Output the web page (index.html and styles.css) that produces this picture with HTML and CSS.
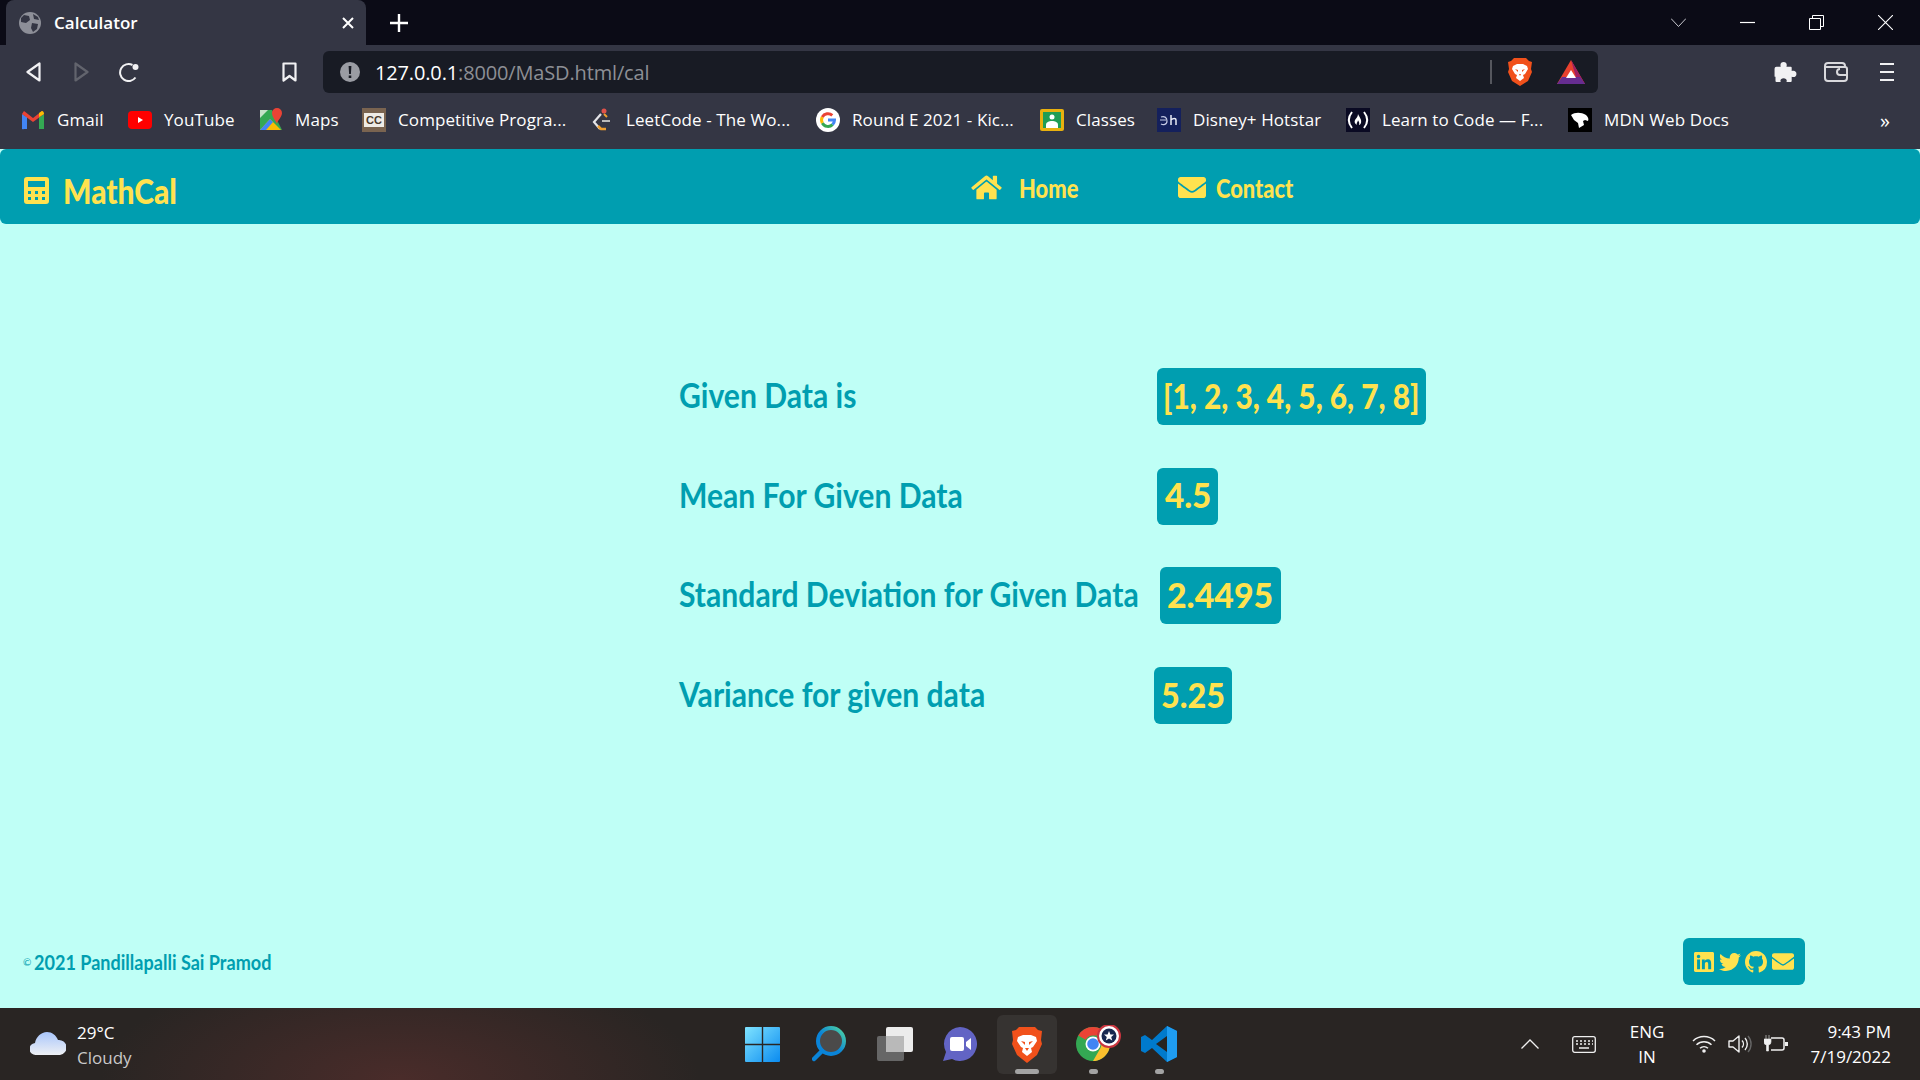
FILE: index.html
```html
<!DOCTYPE html>
<html>
    <head>
        <meta charset="utf-8">
        <title>Calculator</title>
        <link rel="stylesheet" href="styles.css">
    </head>
    <body>
        <div class="tabstrip">
            <div class="tab">
                <svg class="tab-globe" viewBox="0 0 22 22"><circle cx="11" cy="11" r="11" fill="#8d8f98"/><path d="M5 3l5 1 1 4-4 3-5-1 0-4zM13 11l6 1-1 5-4 3-2-4zM14 2l5 3 1 3-5-1z" fill="#343644"/></svg>
                <span class="tab-title">Calculator</span>
                <svg class="tab-close" viewBox="0 0 12 12"><path d="M1 1l10 10M11 1L1 11" stroke="#fff" stroke-width="2"/></svg>
            </div>
            <svg class="tab-new" viewBox="0 0 18 18"><path d="M9 0v18M0 9h18" stroke="#fff" stroke-width="2.4"/></svg>
            <div class="winctrls">
                <svg viewBox="0 0 15 15"><path d="M0 3.5l7.5 8 7.500-8" fill="none" stroke="#c9c9cf" stroke-width="1"/></svg>
                <svg viewBox="0 0 15 15"><path d="M0 7.500h15" stroke="#fff" stroke-width="1.200"/></svg>
                <svg viewBox="0 0 15 15"><path d="M.5 3.500h11v11H.5zM3.500 3.500V.5h11v11h-3" fill="none" stroke="#fff" stroke-width="1"/></svg>
                <svg viewBox="0 0 15 15"><path d="M0 0l15 15M15 0L0 15" stroke="#fff" stroke-width="1.100"/></svg>
            </div>
        </div>

        <div class="toolbar">
            <svg class="tool back" viewBox="0 0 15 20"><path d="M13.500 1.500v17L1.500 10z" fill="none" stroke="#f1f1f3" stroke-width="2.200" stroke-linejoin="round"/></svg>
            <svg class="tool forward" viewBox="0 0 15 20"><path d="M1.500 1.500v17l12-8.500z" fill="none" stroke="#62646d" stroke-width="2.200" stroke-linejoin="round"/></svg>
            <svg class="tool reload" viewBox="0 0 21 20"><path d="M16.500 15.500a8.500 8.500 0 1 1-3-12.500" fill="none" stroke="#f1f1f3" stroke-width="2"/><circle cx="16.500" cy="5" r="3" fill="#f1f1f3"/></svg>
            <svg class="tool bookmark" viewBox="0 0 15 20"><path d="M1.500 1.500h12v17l-6-4.500-6 4.500z" fill="none" stroke="#f1f1f3" stroke-width="2.200" stroke-linejoin="round"/></svg>
            <div class="address">
                <svg class="addr-info" viewBox="0 0 20 20"><circle cx="10" cy="10" r="10" fill="#9a9ca3"/><path d="M8.600 4h2.800l-.5 8H9.100zM8.700 13.500h2.600v2.600H8.700z" fill="#181b24"/></svg>
                <div class="addr-url"><span class="addr-host">127.0.0.1</span>:8000/MaSD.html/cal</div>
                <div class="addr-sep"></div>
                <svg class="addr-brave" viewBox="0 0 24 28"><path d="M6 0h12l3 3 3 1-1 7 1 3-4 9-8 5-8-5-4-9 1-3-1-7 3-1z" fill="#f1511b"/><path d="M5 8l4-2h6l4 2 1 3-3 5-2 1 1 3-4 3-4-3 1-3-2-1-3-5z" fill="#fff"/><path d="M7 11l3 1v2zM17 11l-3 1v2zM11 16h2l-1 2z" fill="#f1511b"/></svg>
                <svg class="addr-bat" viewBox="0 0 28 24"><path d="M14 0l14 24H0z" fill="#e8412e"/><path d="M14 0l14 24H21z" fill="#9e1f63"/><path d="M0 24l5-7h18l5 7z" fill="#662d91"/><path d="M14 10l5 8H9z" fill="#fff"/></svg>
            </div>
            <svg class="tool puzzle" viewBox="0 0 23 21"><path d="M2 5h4.500C5.500 2 7 0 9.500 0S13.500 2 12.500 5H17a1 1 0 0 1 1 1v3.500c3-1 5 .5 5 3s-2 4-5 3V20a1 1 0 0 1-1 1h-4.500c1-2.500-.5-4-3-4s-4 1.500-3 4H2a1 1 0 0 1-1-1v-4.500c-1 .2-1 0-1-1V7a2 2 0 0 1 2-2z" fill="#f1f1f3"/></svg>
            <svg class="tool wallet" viewBox="0 0 24 20"><path d="M21 5V4a3 3 0 0 0-3-3H4a3 3 0 0 0-3 3v12a3 3 0 0 0 3 3h16a3 3 0 0 0 3-3v-3" fill="none" stroke="#d9d9dd" stroke-width="2"/><path d="M1 5h20a2 2 0 0 1 2 2v6h-7a3 3 0 0 1 0-6" fill="none" stroke="#d9d9dd" stroke-width="2"/></svg>
            <svg class="tool menu" viewBox="0 0 14 19"><path d="M0 1.500h14M0 9.500h14M0 17.500h14" stroke="#f1f1f3" stroke-width="2.200"/></svg>
        </div>

        <div class="bookmarks">
            <div class="bm">
                <svg viewBox="0 0 24 24"><path d="M1 21V6l5 3v12H3a2 2 0 0 1-2 0z" fill="#4285f4"/><path d="M18 21V9l5-3v15z" fill="#34a853"/><path d="M1 6l11 8 11-8-2-3-9 7-9-7z" fill="#ea4335"/><path d="M18 9l5-3c0-2-1-3-2-3l-3 2z" fill="#fbbc04"/></svg>
                <span class="bm-gmail">Gmail</span>
            </div>
            <div class="bm">
                <svg viewBox="0 0 24 24"><rect y="3" width="24" height="18" rx="4" fill="#f00"/><path d="M10 9l5 3-5 3z" fill="#fff"/></svg>
                <span class="bm-youtube">YouTube</span>
            </div>
            <div class="bm">
                <svg viewBox="0 0 24 24"><path d="M1 2h12l10 20H1z" fill="#34a853"/><path d="M1 22l10-11 11 11z" fill="#fbbc04"/><path d="M1 22l10-11 3 3-7 8z" fill="#4285f4"/><path d="M1 2h8l-8 8z" fill="#c6e2c9"/><path d="M18 0a5 5 0 0 1 5 5c0 4-5 8-5 11-1-3-5-7-5-11a5 5 0 0 1 5-5z" fill="#ea4335"/></svg>
                <span class="bm-maps">Maps</span>
            </div>
            <div class="bm">
                <svg viewBox="0 0 24 24"><rect width="24" height="24" fill="#7a6450"/><rect x="2" y="5" width="20" height="14" fill="#efece6"/><text x="12" y="16" class="cc-text">CC</text></svg>
                <span class="bm-cp">Competitive Progra...</span>
            </div>
            <div class="bm">
                <svg viewBox="0 0 24 24"><circle cx="14" cy="3" r="2.500" fill="#e0524a"/><path d="M11 6l-7 8 6 7" fill="none" stroke="#e4e4e8" stroke-width="2.200"/><path d="M8 18l3 3h5" fill="none" stroke="#f0a030" stroke-width="2.500"/><path d="M12 13h8" stroke="#bbb" stroke-width="2"/><path d="M14 6l3 3" stroke="#f0a030" stroke-width="2"/></svg>
                <span class="bm-leet">LeetCode - The Wo...</span>
            </div>
            <div class="bm">
                <svg viewBox="0 0 24 24"><circle cx="12" cy="12" r="12" fill="#fff"/><path d="M12 12h6.500a6.500 6.500 0 0 1-2 4.700" fill="none" stroke="#4285f4" stroke-width="3"/><path d="M16.500 16.700A6.500 6.500 0 0 1 6.300 15" fill="none" stroke="#34a853" stroke-width="3"/><path d="M6.300 15a6.500 6.500 0 0 1 0-6" fill="none" stroke="#fbbc04" stroke-width="3"/><path d="M6.300 9a6.500 6.500 0 0 1 10-1.700" fill="none" stroke="#ea4335" stroke-width="3"/></svg>
                <span class="bm-google">Round E 2021 - Kic...</span>
            </div>
            <div class="bm">
                <svg viewBox="0 0 24 24"><rect y="1" width="24" height="22" rx="2" fill="#e8b10f"/><rect x="3" y="4" width="18" height="16" fill="#1f9d55"/><circle cx="12" cy="9" r="2.500" fill="#fff"/><path d="M6 17c0-3 3-4 6-4s6 1 6 4v3H6z" fill="#fff"/></svg>
                <span class="bm-classes">Classes</span>
            </div>
            <div class="bm">
                <svg viewBox="0 0 24 24"><rect width="24" height="24" fill="#14205c"/><path d="M4 9c3-1 6 0 6 4s-4 4-6 3M3 12h6" fill="none" stroke="#c6cbe6" stroke-width="1.200"/><path d="M14 7v10M14 12c2-2 5-2 5 0v5" fill="none" stroke="#e8eaf6" stroke-width="1.500"/></svg>
                <span class="bm-disney">Disney+ Hotstar</span>
            </div>
            <div class="bm">
                <svg viewBox="0 0 24 24"><rect width="24" height="24" fill="#0a0a23"/><path d="M6 4C2 9 2 15 6 20M18 4c4 5 4 11 0 16" fill="none" stroke="#fff" stroke-width="2"/><path d="M12 6c1 3 4 5 3 9-1 2-2 2-2 2 1-3-1-4-1-5 0 2-2 3-1 5-2-1-3-3-2-5 1-2 3-3 3-6z" fill="#fff"/></svg>
                <span class="bm-fcc">Learn to Code — F...</span>
            </div>
            <div class="bm">
                <svg viewBox="0 0 24 24"><rect width="24" height="24" fill="#000"/><path d="M3 7c4-3 10-3 15 0 2 2 3 4 2 6l-3-1-2 1 1 4-5 3-1-5-4-3z" fill="#fff"/></svg>
                <span class="bm-mdn">MDN Web Docs</span>
            </div>
            <span class="bm-more">»</span>
        </div>

        <div class="navbar">
            <div class="brand">
                <svg class="brand-icon" viewBox="0 0 25 27"><path fill-rule="evenodd" d="M3 0h19a3 3 0 0 1 3 3v21a3 3 0 0 1-3 3H3a3 3 0 0 1-3-3V3a3 3 0 0 1 3-3zM4 4v6h17V4zM4 14v3h3v-3zM11 14v3h3v-3zM18 14v3h3v-3zM4 20v3h3v-3zM11 20v3h3v-3zM18 20v3h3v-3z" fill="#ffe24f"/></svg>
                <span class="brand-name"><span class="squeeze">MathCal</span></span>
            </div>
            <a class="navlink nav-home">
                <svg class="home-icon" viewBox="0 0 576 512"><path d="M280.37 148.26L96 300.11V464a16 16 0 0 0 16 16l112.06-.29a16 16 0 0 0 15.92-16V368a16 16 0 0 1 16-16h64a16 16 0 0 1 16 16v95.64a16 16 0 0 0 16 16.05L464 480a16 16 0 0 0 16-16V300L295.67 148.26a12.19 12.19 0 0 0-15.3 0zM571.6 251.47L488 182.56V44.05a12 12 0 0 0-12-12h-56a12 12 0 0 0-12 12v72.61L318.47 43a48 48 0 0 0-61 0L4.34 251.47a12 12 0 0 0-1.6 16.9l25.5 31A12 12 0 0 0 45.15 301l235.22-193.74a12.19 12.19 0 0 1 15.3 0L530.9 301a12 12 0 0 0 16.9-1.6l25.5-31a12 12 0 0 0-1.7-16.93z" fill="#ffe24f"/></svg>
                <span class="nav-text nav-text-home"><span class="squeeze">Home</span></span>
            </a>
            <a class="navlink nav-contact">
                <svg class="mail-icon" viewBox="0 0 512 384"><path d="M502.3 126.800c3.900-3.100 9.700-.2 9.700 4.700V336c0 26.500-21.500 48-48 48H48c-26.500 0-48-21.500-48-48V131.600c0-5 5.700-7.800 9.700-4.700 22.400 17.400 52.100 39.500 154.100 113.600 21.100 15.400 56.700 47.800 92.200 47.600 35.700.3 72-32.800 92.300-47.600 102-74.100 131.600-96.300 154-113.700zM256 256c23.200.4 56.600-29.200 73.400-41.400 132.700-96.300 142.800-104.700 173.400-128.700 5.800-4.500 9.200-11.500 9.200-18.900V48c0-26.500-21.500-48-48-48H48C21.500 0 0 21.500 0 48v19c0 7.400 3.400 14.300 9.200 18.900 30.600 23.900 40.700 32.400 173.400 128.700 16.800 12.200 50.200 41.800 73.400 41.400z" fill="#ffe24f"/></svg>
                <span class="nav-text"><span class="squeeze">Contact</span></span>
            </a>
        </div>

        <div class="main">
            <div class="row">
                <div class="label"><span class="squeeze">Given Data is</span></div>
                <div class="value value-list"><span class="squeeze">[1, 2, 3, 4, 5, 6, 7, 8]</span></div>
            </div>
            <div class="row">
                <div class="label"><span class="squeeze">Mean For Given Data</span></div>
                <div class="value value-mean"><span class="squeeze">4.5</span></div>
            </div>
            <div class="row">
                <div class="label"><span class="squeeze">Standard Deviation for Given Data</span></div>
                <div class="value value-sd"><span class="squeeze">2.4495</span></div>
            </div>
            <div class="row">
                <div class="label"><span class="squeeze">Variance for given data</span></div>
                <div class="value value-var"><span class="squeeze">5.25</span></div>
            </div>
        </div>

        <div class="footer">
            <div class="copy"><span class="copy-mark">©</span><span class="squeeze">2021 Pandillapalli Sai Pramod</span></div>
            <div class="social">
                <svg class="soc-in" viewBox="0 32 448 448"><path d="M416 32H31.900C14.300 32 0 46.500 0 64.300v383.400C0 465.500 14.300 480 31.900 480H416c17.600 0 32-14.500 32-32.300V64.300c0-17.800-14.400-32.300-32-32.300zM135.400 416H69V202.200h66.500V416zm-33.200-243c-21.300 0-38.500-17.300-38.500-38.500S80.900 96 102.200 96c21.200 0 38.500 17.300 38.500 38.500 0 21.300-17.200 38.500-38.500 38.500zm282.100 243h-66.400V312c0-24.800-.5-56.700-34.500-56.700-34.600 0-39.900 27-39.900 54.900V416h-66.400V202.200h63.700v29.200h.9c8.900-16.800 30.600-34.500 62.900-34.500 67.200 0 79.700 44.300 79.700 101.900V416z" fill="#ffe24f"/></svg>
                <svg class="soc-tw" viewBox="0 48 512 416"><path d="M459.370 151.716c.325 4.548.325 9.097.325 13.645 0 138.720-105.583 298.558-298.558 298.558-59.452 0-114.680-17.219-161.137-47.106 8.447.974 16.568 1.299 25.340 1.299 49.055 0 94.213-16.568 130.274-44.832-46.132-.975-84.792-31.188-98.112-72.772 6.498.974 12.995 1.624 19.818 1.624 9.421 0 18.843-1.300 27.614-3.573-48.081-9.747-84.143-51.980-84.143-102.985v-1.299c13.969 7.797 30.214 12.670 47.431 13.319-28.264-18.843-46.781-51.005-46.781-87.391 0-19.492 5.197-37.360 14.294-52.954 51.655 63.675 129.300 105.258 216.365 109.807-1.624-7.797-2.599-15.918-2.599-24.040 0-57.828 46.782-104.934 104.934-104.934 30.213 0 57.502 12.670 76.670 33.137 23.715-4.548 46.456-13.320 66.599-25.340-7.798 24.366-24.366 44.833-46.132 57.827 21.117-2.273 41.584-8.122 60.426-16.243-14.292 20.791-32.161 39.308-52.628 54.253z" fill="#ffe24f"/></svg>
                <svg class="soc-gh" viewBox="0 0 16 16"><path d="M8 0C3.580 0 0 3.580 0 8c0 3.540 2.290 6.530 5.470 7.590.4.070.55-.17.55-.38 0-.19-.01-.82-.01-1.490-2.010.37-2.530-.49-2.690-.94-.09-.23-.48-.94-.82-1.130-.28-.15-.68-.52-.01-.53.63-.01 1.080.58 1.230.82.72 1.210 1.870.87 2.330.66.070-.52.28-.87.51-1.070-1.780-.2-3.640-.89-3.640-3.950 0-.87.31-1.590.82-2.150-.08-.2-.36-1.020.08-2.120 0 0 .67-.21 2.200.82.64-.18 1.320-.27 2-.27.68 0 1.360.09 2 .27 1.530-1.040 2.200-.82 2.200-.82.44 1.100.16 1.920.08 2.120.51.56.82 1.270.82 2.150 0 3.070-1.870 3.750-3.650 3.950.29.25.54.73.54 1.480 0 1.070-.01 1.930-.01 2.200 0 .21.15.46.55.38A8.013 8.013 0 0 0 16 8c0-4.420-3.580-8-8-8z" fill="#ffe24f"/></svg>
                <svg class="soc-mail" viewBox="0 0 512 384"><path d="M502.300 126.800c3.900-3.100 9.700-.2 9.700 4.700V336c0 26.500-21.500 48-48 48H48c-26.500 0-48-21.500-48-48V131.600c0-5 5.700-7.800 9.700-4.700 22.400 17.400 52.100 39.500 154.100 113.600 21.100 15.400 56.700 47.800 92.200 47.600 35.700.3 72-32.800 92.300-47.600 102-74.100 131.600-96.300 154-113.700zM256 256c23.200.4 56.600-29.200 73.400-41.400 132.700-96.300 142.800-104.700 173.400-128.700 5.800-4.500 9.200-11.500 9.200-18.900V48c0-26.500-21.500-48-48-48H48C21.500 0 0 21.500 0 48v19c0 7.400 3.400 14.300 9.200 18.900 30.600 23.900 40.700 32.400 173.400 128.700 16.800 12.200 50.200 41.800 73.400 41.400z" fill="#ffe24f"/></svg>
            </div>
        </div>

        <div class="taskbar">
            <div class="weather">
                <svg class="weather-icon" viewBox="0 0 36 24"><defs><linearGradient id="cloud" x1="0" y1="0" x2="0" y2="1"><stop offset="0" stop-color="#a9c6fb"/><stop offset="1" stop-color="#eef0f4"/></linearGradient></defs><path d="M6 23a6 6 0 0 1-1-12c1-6 6-11 12-11 5 0 9 3 11 8a7.500 7.500 0 0 1 2 15z" fill="url(#cloud)"/></svg>
                <div class="weather-text">
                    <div class="weather-temp">29°C</div>
                    <div class="weather-desc">Cloudy</div>
                </div>
            </div>
            <div class="apps">
                <svg class="app app-start" viewBox="0 0 35 35"><defs><linearGradient id="win" x1="0" y1="0" x2="1" y2="1"><stop offset="0" stop-color="#7fe3ff"/><stop offset="1" stop-color="#0a8bf0"/></linearGradient></defs><path d="M1 0h15.800v16.800H0V1a1 1 0 0 1 1-1zM18.200 0H34a1 1 0 0 1 1 1v15.800H18.200zM0 18.200h16.800V35H1a1 1 0 0 1-1-1zM18.200 18.200H35V34a1 1 0 0 1-1 1H18.200z" fill="url(#win)"/></svg>
                <svg class="app app-search" viewBox="0 0 34 36"><defs><linearGradient id="ring" x1="0" y1="1" x2="1" y2="0"><stop offset=".45" stop-color="#0a84d8"/><stop offset="1" stop-color="#4fd6a0"/></linearGradient></defs><circle cx="19" cy="15" r="13" fill="#4b4a4a" stroke="url(#ring)" stroke-width="4"/><path d="M10 25l-8 8" stroke="#0a84d8" stroke-width="4.500" stroke-linecap="round"/></svg>
                <svg class="app app-view" viewBox="0 0 36 34"><rect y="9" width="27" height="25" rx="2" fill="#666"/><rect x="9" width="27" height="25" rx="2" fill="#ececec"/><rect x="9" y="9" width="18" height="16" fill="#b9b9b9"/></svg>
                <svg class="app app-chat" viewBox="0 0 34 34"><path d="M17 0a17 17 0 1 1-8 32l-9 2 3-9A17 17 0 0 1 17 0z" fill="#6264c4"/><rect x="7" y="10" width="14" height="14" rx="2" fill="#fff"/><path d="M23 15l5-4v12l-5-4z" fill="#fff"/></svg>
                <div class="app-active">
                    <svg class="app-brave" viewBox="0 0 30 36"><path d="M7 0h16l3 3 4 1-1 9 1 4-5 11-10 8-10-8-5-11 1-4-1-9 4-1z" fill="#f1511b"/><path d="M6 10l5-2h8l5 2 1 4-4 6-2 1 1 4-5 4-5-4 1-4-2-1-4-6z" fill="#fff"/><path d="M9 14l4 1v3zM21 14l-4 1v3zM13 21h4l-2 3z" fill="#f1511b"/></svg>
                    <div class="pill pill-wide"></div>
                </div>
                <div class="app-chrome">
                    <svg class="chrome-logo" viewBox="0 0 46 36"><circle cx="17" cy="19" r="17" fill="#34a853"/><path d="M17 2a17 17 0 0 1 14.700 8.500H17A8.500 8.500 0 0 0 9.600 14.800L2.300 10.500A17 17 0 0 1 17 2z" fill="#ea4335"/><path d="M31.700 10.500A17 17 0 0 1 17 36l7.400-12.800A8.500 8.500 0 0 0 25.500 19z" fill="#fbc02d"/><circle cx="17" cy="19" r="7.500" fill="#fff"/><circle cx="17" cy="19" r="5.800" fill="#4285f4"/><circle cx="33" cy="11" r="11" fill="#fff"/><circle cx="33" cy="11" r="11" fill="none" stroke="#c8353f" stroke-width="2"/><circle cx="33" cy="11" r="7.500" fill="#17284f"/><path d="M33 6l1.400 3.400 3.600.2-2.800 2.300 1 3.600-3.200-2-3.200 2 1-3.600L28 9.600l3.600-.2z" fill="#fff"/></svg>
                    <div class="pill"></div>
                </div>
                <div class="app-vscode">
                    <svg class="vscode-logo" viewBox="0 0 36 36"><path d="M26 0l10 5v26l-10 5-15-14-7 5-4-2v-14l4-2 7 5z" fill="#007acc"/><path d="M26 0l10 5v26l-10 5z" fill="#1f9cf0"/><path d="M26 10L15 18l11 8z" fill="#262321"/></svg>
                    <div class="pill"></div>
                </div>
            </div>
            <div class="tray">
                <svg class="tray-chevron" viewBox="0 0 18 10"><path d="M.5 9.500L9 1l8.500 8.500" fill="none" stroke="#f0f0f0" stroke-width="1.300"/></svg>
                <svg class="tray-keyboard" viewBox="0 0 24 17"><rect x=".7" y=".7" width="22.600" height="15.600" rx="2" fill="none" stroke="#f0f0f0" stroke-width="1.300"/><path d="M4 5h2M8 5h2M12 5h2M16 5h2M20 5h1M4 8h2M8 8h2M12 8h2M16 8h2M20 8h1M7 12h10" stroke="#f0f0f0" stroke-width="1.300"/></svg>
                <div class="tray-lang">ENG<br>IN</div>
                <svg class="tray-wifi" viewBox="0 0 24 18"><path d="M1 6a16 16 0 0 1 22 0M4.500 9.800a11 11 0 0 1 15 0M8 13.200a6 6 0 0 1 8 0" fill="none" stroke="#f0f0f0" stroke-width="1.500"/><circle cx="12" cy="16" r="1.800" fill="#f0f0f0"/></svg>
                <svg class="tray-vol" viewBox="0 0 24 18"><path d="M1 6h4l6-5v16l-6-5H1z" fill="none" stroke="#f0f0f0" stroke-width="1.400" stroke-linejoin="round"/><path d="M14 5.500a5 5 0 0 1 0 7M17 3a9 9 0 0 1 0 12" fill="none" stroke="#f0f0f0" stroke-width="1.400"/><path d="M20 1a12 12 0 0 1 0 16" fill="none" stroke="#666" stroke-width="1.400"/></svg>
                <svg class="tray-batt" viewBox="0 0 24 18"><path d="M7 3h11a2 2 0 0 1 2 2v8a2 2 0 0 1-2 2H7" fill="none" stroke="#f0f0f0" stroke-width="1.500"/><path d="M21 7h3v4h-3z" fill="#f0f0f0"/><path d="M2 0v4M5 0v4M0 4h7v3a3 3 0 0 1-2.500 3v6h-2v-6A3 3 0 0 1 0 7z" fill="#f0f0f0" stroke="#f0f0f0" stroke-width=".6"/></svg>
                <div class="tray-clock">9:43 PM<br>7/19/2022</div>
            </div>
        </div>
    </body>
</html>
```

FILE: styles.css
```css
html, body {
    margin: 0;
    height: 100%;
}
body {
    width: 1920px;
    height: 1080px;
    overflow: hidden;
    display: flex;
    flex-direction: column;
    background-color: #bffff6;
    font-family: "Open Sans", "Noto Sans", sans-serif;
}
svg {
    display: block;
    flex: none;
}

/* no condensed face is installed, so the site's narrow font is squeezed */
.squeeze {
    display: inline-block;
    white-space: nowrap;
    transform: scaleX(.86);
    transform-origin: left center;
}

/* browser tabs */
.tabstrip {
    height: 45px;
    flex: none;
    display: flex;
    align-items: center;
    padding-left: 6px;
    background-color: #0b0b16;
}
.tab {
    width: 360px;
    height: 45px;
    box-sizing: border-box;
    padding: 0 12px 0 13px;
    display: flex;
    align-items: center;
    background-color: #343644;
    border-radius: 8px 8px 0 0;
}
.tab-globe {
    width: 22px;
    height: 22px;
}
.tab-title {
    margin-left: 13px;
    font-size: 17px;
    font-weight: 600;
    color: #fff;
}
.tab-close {
    width: 12px;
    height: 12px;
    margin-left: auto;
}
.tab-new {
    width: 18px;
    height: 18px;
    margin-left: 24px;
}
.winctrls {
    margin-left: auto;
    padding-right: 27px;
    display: flex;
    gap: 54px;
}
.winctrls svg {
    width: 15px;
    height: 15px;
    margin-top: -1px;
}

/* address bar */
.toolbar {
    height: 42px;
    flex: none;
    padding-top: 6px;
    display: flex;
    align-items: center;
    background-color: #343644;
}
.tool {
    height: 20px;
}
.back { width: 15px; margin-left: 26px; }
.forward { width: 15px; margin-left: 33px; }
.reload { width: 21px; margin-left: 30px; }
.bookmark { width: 15px; margin-left: 142px; }
.address {
    width: 1275px;
    height: 42px;
    margin-left: 26px;
    display: flex;
    align-items: center;
    background-color: #181b24;
    border-radius: 6px;
}
.addr-info {
    width: 20px;
    height: 20px;
    margin-left: 17px;
}
.addr-url {
    width: 1115px;
    margin-left: 15px;
    font-size: 20px;
    letter-spacing: -0.15px;
    color: #8d8f95;
}
.addr-host {
    color: #fff;
}
.addr-sep {
    width: 2px;
    height: 24px;
    background-color: #55575e;
}
.addr-brave {
    width: 24px;
    height: 28px;
    margin-left: 16px;
}
.addr-bat {
    width: 28px;
    height: 24px;
    margin-left: 25px;
}
.puzzle { width: 23px; margin-left: 176px; }
.wallet { width: 24px; margin-left: 27px; }
.menu { width: 14px; margin-left: 32px; }

/* bookmarks */
.bookmarks {
    height: 54px;
    flex: none;
    padding: 0 30px 2px 21px;
    display: flex;
    align-items: center;
    gap: 26px;
    background-color: #343644;
    font-size: 17px;
    letter-spacing: .1px;
    color: #fff;
}
.bm {
    display: flex;
    align-items: center;
    gap: 12px;
    white-space: nowrap;
}
.bm span {
    margin-top: -2px;
}
.bm svg {
    width: 24px;
    height: 24px;
}
.cc-text {
    font-family: "Liberation Sans", sans-serif;
    font-size: 11px;
    font-weight: bold;
    text-anchor: middle;
    fill: #4a3a2c;
}
.bm-gmail { width: 45px; }
.bm-youtube { width: 69px; }
.bm-maps { width: 41px; }
.bm-cp { width: 166px; }
.bm-leet { width: 164px; }
.bm-google { width: 162px; }
.bm-classes { width: 55px; }
.bm-disney { width: 127px; }
.bm-fcc { width: 160px; }
.bm-mdn { width: 127px; }
.bm-more {
    margin-left: auto;
    font-size: 20px;
}

/* site nav */
.navbar {
    height: 75px;
    flex: none;
    padding-left: 24px;
    display: flex;
    align-items: center;
    background-color: #009eb0;
    border-radius: 6px;
    font-family: Lato, "Liberation Sans", sans-serif;
    font-weight: 900;
    color: #ffe24f;
}
.brand {
    width: 947px;
    padding-top: 7px;
    display: flex;
    align-items: center;
    gap: 14px;
    flex: none;
}
.brand-icon {
    width: 25px;
    height: 27px;
}
.brand-name {
    width: 111px;
    font-size: 35px;
}
.brand-name .squeeze {
    transform: scaleX(.856);
}
.navlink {
    display: flex;
    align-items: center;
    font-size: 27px;
    padding-top: 1px;
}
.nav-text {
    width: 77px;
}
.nav-text .squeeze {
    transform: scaleX(.81);
}
.nav-text-home {
    width: 58px;
}
.home-icon {
    width: 31px;
    height: 27px;
    margin-right: 17px;
}
.nav-contact {
    margin-left: 101px;
}
.mail-icon {
    width: 28px;
    height: 21px;
    margin-right: 10px;
}

/* results */
.main {
    flex: 1;
    padding: 144px 0 0 679px;
    display: flex;
    flex-direction: column;
    gap: 42.7px;
    font-family: Lato, "Liberation Sans", sans-serif;
    font-size: 35px;
    font-weight: bold;
}
.row {
    display: flex;
    align-items: center;
}
.label {
    width: 478px;
    flex: none;
    margin-bottom: 5px;
    color: #009eb0;
}
.value {
    height: 57px;
    box-sizing: border-box;
    padding: 0 0 4px 6px;
    display: flex;
    align-items: center;
    background-color: #009eb0;
    border-radius: 6px;
    font-weight: 900;
    color: #ffe24f;
}
.value-list { width: 269px; }
.value-list .squeeze {
    transform: scaleX(.853);
}
.value-mean {
    width: 61px;
    padding-left: 8px;
}
.value-mean .squeeze {
    transform: scaleX(.947);
}
.value-sd {
    width: 121px;
    padding-left: 7px;
    margin-left: 3px;
}
.value-sd .squeeze {
    transform: scaleX(.966);
}
.value-var {
    width: 78px;
    padding-left: 7px;
    margin-left: -3px;
}
.value-var .squeeze {
    transform: scaleX(.924);
}

/* footer */
.footer {
    height: 85px;
    flex: none;
    box-sizing: border-box;
    padding: 15px 115px 23px 23px;
    display: flex;
    align-items: center;
    justify-content: space-between;
    color: #009eb0;
}
.copy {
    display: flex;
    align-items: center;
    font-family: Lato, "Liberation Sans", sans-serif;
    font-size: 21px;
    font-weight: bold;
}
.copy-mark {
    width: 11px;
    font-size: 10px;
    font-weight: normal;
}
.social {
    height: 47px;
    box-sizing: border-box;
    padding: 0 11px;
    display: flex;
    align-items: center;
    gap: 4.6px;
    background-color: #009eb0;
    border-radius: 6px;
}
.soc-in { width: 20px; height: 20px; }
.soc-tw { width: 22px; height: 18px; }
.soc-gh { width: 22px; height: 22px; }
.soc-mail { width: 22px; height: 17px; }

/* windows taskbar */
.taskbar {
    height: 72px;
    flex: none;
    display: flex;
    align-items: center;
    background: radial-gradient(ellipse 300px 120px at 400px 72px, #4a2c2a, transparent), #292523;
    color: #fff;
}
.weather {
    width: 745px;
    display: flex;
    align-items: center;
    flex: none;
    padding-left: 30px;
    box-sizing: border-box;
}
.weather-icon {
    width: 36px;
    height: 24px;
}
.weather-text {
    margin-left: 11px;
    padding-top: 2px;
    font-size: 17px;
    line-height: 25px;
}
.weather-desc {
    color: #c9c9c9;
}
.apps {
    display: flex;
    align-items: center;
}
.app-start { width: 35px; height: 35px; }
.app-search { width: 34px; height: 36px; margin-left: 32px; }
.app-view { width: 36px; height: 34px; margin-left: 31px; }
.app-chat { width: 34px; height: 34px; margin-left: 30px; }
.app-active {
    width: 60px;
    height: 59px;
    margin-left: 20px;
    margin-top: 1px;
    box-sizing: border-box;
    padding-top: 12px;
    display: flex;
    flex-direction: column;
    align-items: center;
    gap: 6px;
    background-color: #363331;
    border-radius: 6px;
}
.app-brave { width: 30px; height: 36px; }
.app-chrome, .app-vscode {
    height: 59px;
    margin-top: 1px;
    box-sizing: border-box;
    display: flex;
    flex-direction: column;
    align-items: center;
    justify-content: flex-end;
    gap: 7px;
}
.app-chrome {
    margin-left: 19px;
}
.app-chrome .pill {
    margin-right: 12px;
}
.chrome-logo {
    width: 46px;
    height: 36px;
    margin-bottom: 1px;
}
.app-vscode {
    margin-left: 19px;
}
.vscode-logo {
    width: 36px;
    height: 36px;
}
.pill {
    width: 9px;
    height: 5px;
    background-color: #a3a3a3;
    border-radius: 3px;
}
.pill-wide {
    width: 24px;
}
.tray {
    flex: 1;
    padding-right: 29px;
    display: flex;
    align-items: center;
    justify-content: flex-end;
    font-size: 17px;
    line-height: 25px;
}
.tray-chevron { width: 18px; height: 10px; }
.tray-keyboard { width: 24px; height: 17px; margin-left: 33px; }
.tray-lang {
    width: 50px;
    margin-left: 26px;
    text-align: center;
}
.tray-wifi, .tray-vol, .tray-batt {
    width: 24px;
    height: 18px;
}
.tray-wifi { margin-left: 20px; }
.tray-vol, .tray-batt { margin-left: 12px; }
.tray-clock {
    width: 90px;
    margin-left: 13px;
    text-align: right;
}
```
